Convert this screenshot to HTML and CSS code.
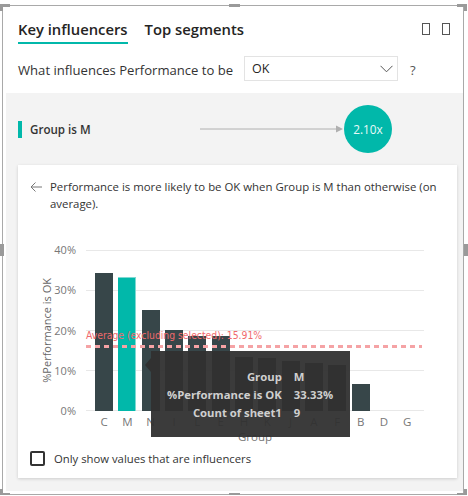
FILE: index.html
```html
<!DOCTYPE html>
<html>
<head>
<meta charset="utf-8">
<link rel="stylesheet" href="styles.css">
</head>
<body>
<div class="frame">
  <span class="handle h-tl"></span>
  <span class="handle h-tr"></span>
  <span class="handle h-bl"></span>
  <span class="handle h-br"></span>
  <span class="handle h-tm"></span>
  <span class="handle h-bm"></span>
  <span class="handle h-lm"></span>
  <span class="handle h-rm"></span>

  <div class="tabs">
    <div class="tab active">Key influencers</div>
    <div class="tab">Top segments</div>
    <div class="tab-icons"><span class="tofu"></span><span class="tofu"></span></div>
  </div>

  <div class="question">
    <span class="q-label">What influences Performance to be</span>
    <div class="select">
      <span>OK</span>
      <svg class="chev" width="13" height="8" viewBox="0 0 13 8"><path d="M0.5 0.8 L6.5 6.8 L12.5 0.8" fill="none" stroke="#555" stroke-width="1"/></svg>
    </div>
    <span class="help">?</span>
  </div>

  <div class="panel">
    <div class="influencer">
      <span class="marker"></span>
      <span class="inf-label">Group is M</span>
      <svg class="arrow" width="143" height="10" viewBox="0 0 143 10"><line x1="0" y1="5" x2="137" y2="5" stroke="#b0b0b0" stroke-width="1"/><path d="M136 1.5 L143 5 L136 8.5 Z" fill="#b0b0b0"/></svg>
      <div class="bubble">2.10x</div>
    </div>

    <div class="card">
      <div class="explain">
        <svg class="back" width="12" height="10" viewBox="0 0 12 10"><path d="M12 5 H1 M5.5 0.5 L1 5 L5.5 9.5" fill="none" stroke="#777" stroke-width="1"/></svg>
        <p>Performance is more likely to be OK when Group is M than otherwise (on average).</p>
      </div>

      <div class="chart">
        <div class="y-title"><span>%Performance is OK</span></div>
        <div class="y-labels"><span>40%</span><span>30%</span><span>20%</span><span>10%</span><span>0%</span></div>
        <div class="plot-wrap">
          <div class="plot">
            <div class="gridlines"><div></div><div></div><div></div><div></div></div>
            <div class="bars">
              <div class="bar" style="height:138px"></div>
              <div class="bar sel" style="height:134px"></div>
              <div class="bar" style="height:101px"></div>
              <div class="bar" style="height:81px"></div>
              <div class="bar" style="height:75px"></div>
              <div class="bar" style="height:75px"></div>
              <div class="bar" style="height:54px"></div>
              <div class="bar" style="height:53px"></div>
              <div class="bar" style="height:50px"></div>
              <div class="bar" style="height:48px"></div>
              <div class="bar" style="height:46px"></div>
              <div class="bar" style="height:27px"></div>
              <div class="bar" style="height:0px"></div>
              <div class="bar" style="height:0px"></div>
            </div>
          </div>
          <div class="x-labels"><span>C</span><span>M</span><span>N</span><span>I</span><span>L</span><span>E</span><span>H</span><span>K</span><span>J</span><span>A</span><span>F</span><span>B</span><span>D</span><span>G</span></div>
          <div class="x-title">Group</div>

          <div class="avg-label">Average (excluding selected): 15.91%</div>
          <div class="avg-line"></div>

          <div class="tooltip">
            <span class="tt-k">Group</span><span class="tt-v">M</span>
            <span class="tt-k">%Performance is OK</span><span class="tt-v">33.33%</span>
            <span class="tt-k">Count of sheet1</span><span class="tt-v">9</span>
          </div>
        </div>
      </div>

      <label class="check"><span class="box"></span><span>Only show values that are influencers</span></label>
    </div>
  </div>
</div>
</body>
</html>
```

FILE: styles.css
```css
html, body {
  margin: 0;
  padding: 0;
  background: #ffffff;
}

body {
  font-family: "Open Sans", "Noto Sans", sans-serif;
  color: #333333;
}

.frame {
  position: relative;
  margin: 5px 0 0 2px;
  width: 462px;
  height: 490px;
  box-sizing: border-box;
  border: 1px solid #a9a9a9;
  display: flex;
  flex-direction: column;
}

.handle {
  position: absolute;
  box-sizing: border-box;
  border-color: #9a9a9a;
  border-style: solid;
  border-width: 0;
}

.h-tl { left: -3px; top: -2px; width: 10px; height: 7px; border-left-width: 3px; border-top-width: 3px; }
.h-tr { right: -4px; top: -2px; width: 10px; height: 7px; border-right-width: 3px; border-top-width: 3px; }
.h-bl { left: -3px; bottom: -2px; width: 10px; height: 7px; border-left-width: 3px; border-bottom-width: 3px; }
.h-br { right: -4px; bottom: -2px; width: 10px; height: 7px; border-right-width: 3px; border-bottom-width: 3px; }
.h-tm { left: 226px; top: -2px; width: 11px; height: 3px; background: #9a9a9a; }
.h-bm { left: 226px; bottom: -3px; width: 11px; height: 4px; background: #9a9a9a; }
.h-lm { left: -3px; top: 238px; width: 4px; height: 12px; background: #9a9a9a; }
.h-rm { right: -5px; top: 238px; width: 4px; height: 12px; background: #9a9a9a; }

/* tabs */
.tabs {
  display: flex;
  align-items: flex-start;
  gap: 17px;
  padding: 12px 13px 0 15px;
}

.tab {
  font-size: 14.8px;
  font-weight: 600;
  line-height: 22px;
  color: #252423;
  padding-bottom: 2px;
  border-bottom: 2px solid transparent;
}

.tab.active {
  border-bottom-color: #01b8aa;
}

.tab-icons {
  margin-left: auto;
  margin-top: 5px;
  display: flex;
  gap: 12px;
}

.tofu {
  width: 8px;
  height: 12px;
  box-sizing: border-box;
  border: 1px solid #555;
}

/* question */
.question {
  display: flex;
  align-items: center;
  margin-top: 12px;
  padding-left: 15px;
  height: 25px;
  font-size: 13.1px;
}

.q-label {
  width: 226px;
  flex: none;
  color: #333;
  padding-top: 3px;
  white-space: nowrap;
}

.select {
  width: 154px;
  height: 25px;
  box-sizing: border-box;
  border: 1px solid #e3e3e3;
  display: flex;
  align-items: center;
  justify-content: space-between;
  padding: 0 4px 0 7px;
  color: #252423;
  font-size: 12.5px;
}

.chev {
  display: block;
}

.help {
  margin-left: 12px;
  color: #555;
  padding-top: 2px;
}

/* panel */
.panel {
  flex: 1;
  margin: 12px 0 3px 3px;
  background: #f3f3f3;
  display: flex;
  flex-direction: column;
}

.influencer {
  display: flex;
  align-items: center;
  height: 48px;
  padding: 12px 0 0 12px;
}

.marker {
  width: 4px;
  height: 17px;
  background: #01b8aa;
  margin-right: 8px;
  flex: none;
}

.inf-label {
  width: 170px;
  flex: none;
  font-size: 11.6px;
  font-weight: 600;
  color: #333;
}

.arrow {
  display: block;
  flex: none;
}

.bubble {
  width: 48px;
  height: 48px;
  margin-left: 1px;
  border-radius: 50%;
  background: #01b8aa;
  color: #e8faf8;
  font-size: 11.8px;
  display: flex;
  align-items: center;
  justify-content: center;
  flex: none;
}

/* card */
.card {
  margin: 12px 6px 0 12px;
  background: #ffffff;
  box-shadow: 0 1px 3px rgba(0, 0, 0, 0.16);
  padding: 13px 18px 12px 12px;
}

.explain {
  display: flex;
  gap: 8px;
  align-items: flex-start;
}

.back {
  display: block;
  flex: none;
  margin-top: 4px;
}

.explain p {
  margin: 0;
  font-size: 11.4px;
  line-height: 17px;
  color: #333;
}

/* chart */
.chart {
  display: flex;
  align-items: flex-start;
  margin: 38px 0 0 5px;
}

.y-title {
  width: 22px;
  height: 161px;
  display: flex;
  align-items: center;
  justify-content: center;
  flex: none;
}

.y-title span {
  writing-mode: vertical-rl;
  transform: rotate(180deg);
  font-size: 11px;
  color: #666;
  white-space: nowrap;
}

.y-labels {
  width: 19px;
  height: 175px;
  margin-top: -7px;
  display: flex;
  flex-direction: column;
  justify-content: space-between;
  align-items: flex-end;
  font-size: 11px;
  line-height: 14px;
  color: #777;
  flex: none;
  white-space: nowrap;
}

.plot-wrap {
  position: relative;
  margin-left: 10px;
  width: 338px;
  flex: none;
}

.plot {
  display: grid;
}

.gridlines,
.bars {
  grid-area: 1 / 1;
}

.gridlines {
  display: flex;
  flex-direction: column;
  border-bottom: 1px solid #e8e8e8;
}

.gridlines div {
  height: 39px;
  border-top: 1px solid #e8e8e8;
}

.bars {
  display: flex;
  align-items: flex-end;
  gap: 5.33px;
  padding-left: 9px;
  height: 161px;
}

.bar {
  width: 18px;
  flex: none;
  background: #374649;
}

.bar.sel {
  background: #01b8aa;
  box-shadow: inset -1px 0 0 #7fd9d2, inset 0 1px 0 #7fd9d2;
}

.x-labels {
  display: flex;
  gap: 5.33px;
  padding-left: 9px;
  margin-top: 4px;
}

.x-labels span {
  width: 18px;
  flex: none;
  text-align: center;
  font-size: 11.5px;
  line-height: 14px;
  color: #777;
}

.x-title {
  text-align: center;
  font-size: 11.5px;
  line-height: 14px;
  margin-top: 1px;
  color: #777;
}

.avg-label {
  position: absolute;
  left: 0;
  top: 79px;
  font-family: "DejaVu Sans Condensed", "DejaVu Sans", sans-serif;
  font-size: 10.3px;
  line-height: 13px;
  color: #f06a6d;
  white-space: nowrap;
}

.avg-line {
  position: absolute;
  left: 0;
  width: 336px;
  top: 95px;
  height: 3px;
  background: repeating-linear-gradient(90deg, #f5a3a5 0 5px, transparent 5px 9px);
}

.tooltip {
  position: absolute;
  left: 65px;
  top: 101px;
  width: 199px;
  height: 86px;
  box-sizing: border-box;
  background: rgba(48, 48, 48, 0.95);
  display: grid;
  grid-template-columns: auto auto;
  justify-content: start;
  column-gap: 12px;
  align-content: start;
  padding: 17px 0 0 16px;
  font-size: 11.3px;
  font-weight: 700;
  line-height: 18px;
  color: #cfcfcf;
}

.tooltip::before {
  content: "";
  position: absolute;
  left: -6px;
  top: 7px;
  border-top: 7px solid transparent;
  border-bottom: 7px solid transparent;
  border-right: 6px solid rgba(48, 48, 48, 0.95);
}

.tt-k {
  text-align: right;
  white-space: nowrap;
}

.tt-v {
  white-space: nowrap;
}

/* checkbox */
.check {
  display: flex;
  align-items: center;
  gap: 9px;
  margin-top: 7px;
  height: 15px;
  font-size: 11.3px;
  color: #333;
}

.box {
  width: 15px;
  height: 15px;
  box-sizing: border-box;
  border: 2px solid #333;
  border-radius: 2px;
  flex: none;
}
```
